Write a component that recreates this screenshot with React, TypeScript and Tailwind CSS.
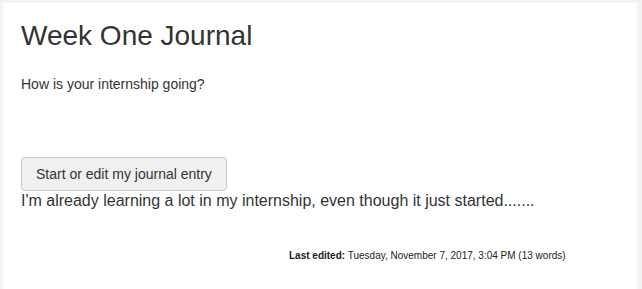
export default function App() {
  return (
    <div className="w-[642px] h-[289px] overflow-hidden bg-[#f3f3f3] pt-[3px] pl-[3px] pr-[5px]" style={{ fontFamily: '"Liberation Sans", Arial, sans-serif' }}>
      <div className="bg-white h-[300px] px-[18px] pt-[18px] text-[#333]">
        <h1 className="text-[28px] leading-[1.1] font-normal">Week One Journal</h1>
        <p className="mt-[22px] text-[14px] leading-[20px]">How is your internship going?</p>
        <div className="mt-[63px]">
          <button className="h-[34px] px-[14px] text-[14px] leading-[20px] border border-[#c6c6c6] rounded-[4px] bg-[#f0f0f0] text-[#333]">
            Start or edit my journal entry
          </button>
        </div>
        <p className="text-[16px] leading-[20px]">I'm already learning a lot in my internship, even though it just started.......</p>
        <div className="mt-[38px] pl-[268px] text-[10px] leading-[14px] text-[#222]">
          <span className="font-bold">Last edited:</span> Tuesday, November 7, 2017, 3:04 PM (13 words)
        </div>
      </div>
    </div>
  );
}
